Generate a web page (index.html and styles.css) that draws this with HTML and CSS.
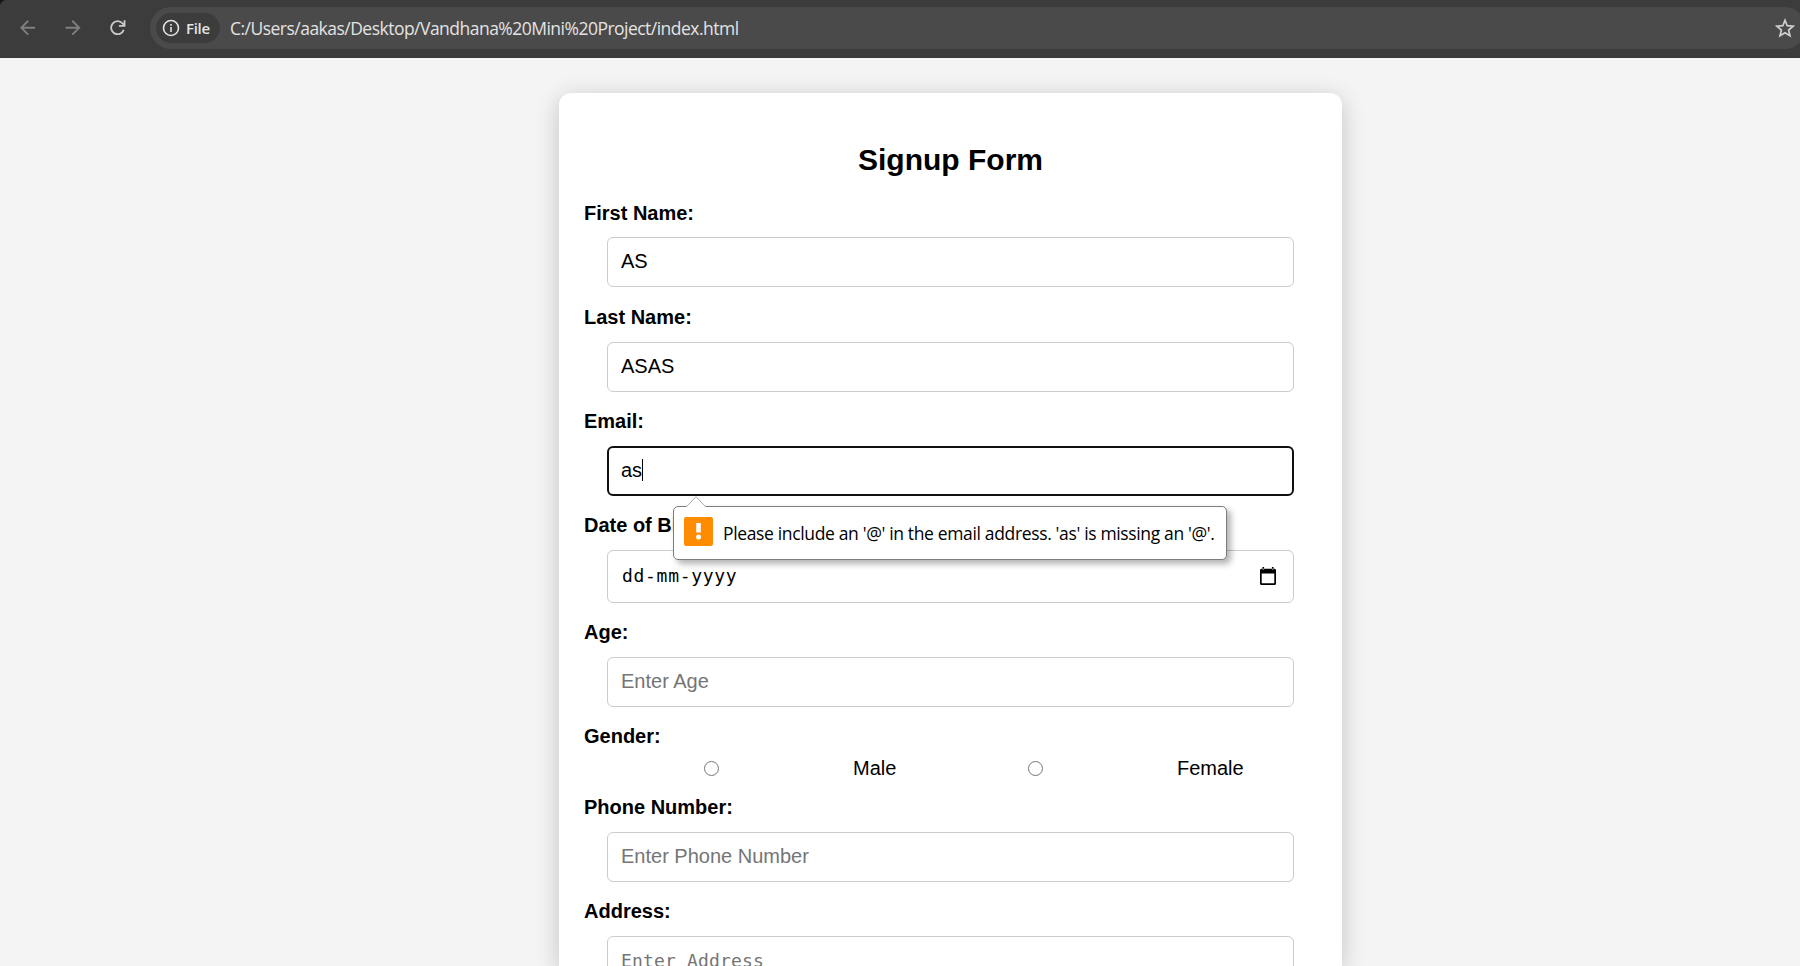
FILE: index.html
```html
<!DOCTYPE html>
<html lang="en">
<head>
<meta charset="utf-8">
<title>Signup Form</title>
<link rel="stylesheet" href="styles.css">
</head>
<body>
<header class="toolbar">
  <nav class="nav">
    <svg class="nav-icon dim" viewBox="0 0 16 16"><path d="M15.5 8H1.5M8.5 .8L1.3 8l7.2 7.2"/></svg>
    <svg class="nav-icon dim" viewBox="0 0 16 16"><path d="M.5 8h14M7.500 .8L14.700 8l-7.200 7.200"/></svg>
    <svg class="nav-icon" viewBox="0 0 16 16"><path d="M14.200 10.200A6.700 6.700 0 1 1 13 3.600L14.800 5.600M15 .3v5.800H9.200"/></svg>
  </nav>
  <div class="omnibox">
    <div class="chip">
      <svg class="info" viewBox="0 0 18 18"><circle cx="9" cy="9" r="7.500"/><path d="M9 8v5M9 5v1.800"/></svg>
      <span class="chip-text">File</span>
    </div>
    <span class="url">C:/Users/aakas/Desktop/Vandhana%20Mini%20Project/index.html</span>
    <svg class="star" viewBox="0 0 20 20"><path d="M10 2.300l2.200 5.400 5.900.5-4.500 3.800 1.400 5.800L10 14.700l-5 3.100L6.400 12 1.900 8.200l5.900-.5z"/></svg>
  </div>
</header>
<main class="page">
  <form class="card">
    <h2 class="title">Signup Form</h2>
    <div class="field">
      <label class="label">First Name:</label>
      <input class="control" type="text" value="AS">
    </div>
    <div class="field">
      <label class="label">Last Name:</label>
      <input class="control" type="text" value="ASAS">
    </div>
    <div class="field">
      <label class="label">Email:</label>
      <div class="control focused">as<span class="caret"></span></div>
      <div class="tooltip">
        <svg class="tip-arrow" viewBox="0 0 22 12"><path class="arrow-fill" d="M1 11.500L11 1l10 10.500V12H1z"/><path class="arrow-line" d="M1 11L11 .8 21 11"/></svg>
        <svg class="warn" viewBox="0 0 29 29"><rect class="warn-bg" width="29" height="29" rx="2"/><path class="warn-mark" d="M12.200 6h4.600v9.500h-4.600z"/><circle class="warn-mark" cx="14.500" cy="20" r="2.500"/></svg>
        <span class="tip-text">Please include an '@' in the email address. 'as' is missing an '@'.</span>
      </div>
    </div>
    <div class="field date-field">
      <label class="label">Date of Birth:</label>
      <div class="control date">
        <span class="date-text">dd-mm-yyyy</span>
        <svg class="calendar" viewBox="0 0 16 18"><path d="M1.500 1.800h13A1.500 1.500 0 0 1 16 3.300v13.200a1.500 1.500 0 0 1-1.500 1.500h-13A1.500 1.500 0 0 1 0 16.500V3.300a1.500 1.500 0 0 1 1.500-1.500zM1.700 6.400v9.900h12.600V6.400zM2.500 0h1.600v2.500H2.500zM11.900 0h1.600v2.500h-1.600z" fill-rule="evenodd"/></svg>
      </div>
    </div>
    <div class="field">
      <label class="label">Age:</label>
      <input class="control" type="text" placeholder="Enter Age">
    </div>
    <div class="field gender-field">
      <label class="label">Gender:</label>
      <div class="options">
        <div class="option"><span class="radio"></span>Male</div>
        <div class="option"><span class="radio"></span>Female</div>
      </div>
    </div>
    <div class="field">
      <label class="label">Phone Number:</label>
      <input class="control" type="text" placeholder="Enter Phone Number">
    </div>
    <div class="field">
      <label class="label">Address:</label>
      <textarea class="control address" placeholder="Enter Address"></textarea>
    </div>
  </form>
</main>
</body>
</html>
```

FILE: styles.css
```css
* { box-sizing: border-box; }

body {
  margin: 0;
  height: 966px;
  overflow: hidden;
  background: #f4f4f4;
  color: #000;
  font: 20px/24px "Liberation Sans", Arial, sans-serif;
}

/* Browser toolbar */
.toolbar {
  position: relative;
  z-index: 1;
  display: flex;
  height: 58px;
  padding: 7px 0 9px 20px;
  overflow: hidden;
  background: radial-gradient(circle at 8px 8px, #3c3c3c 8px, #151515 9px) 0 0 / 8px 8px no-repeat #3c3c3c;
}
.nav {
  display: flex;
  flex: none;
  gap: 29.500px;
  width: 130px;
  padding-top: 12.500px;
}
.nav-icon {
  width: 15.500px;
  height: 15.500px;
  fill: none;
  stroke: #c9c9c9;
  stroke-width: 1.900;
}
.nav-icon.dim { stroke: #7f7f7f; }
.omnibox {
  display: flex;
  flex: none;
  align-items: center;
  width: 1656px;
  height: 42px;
  padding: 0 11px 0 6px;
  border-radius: 21px;
  background: #4a4a4a;
}
.chip {
  display: flex;
  align-items: center;
  width: 64px;
  height: 30px;
  padding-left: 6px;
  border-radius: 15px;
  background: #3c3c3c;
}
.info {
  width: 18px;
  height: 18px;
  fill: none;
  stroke: #e3e3e3;
  stroke-width: 1.600;
}
.chip-text {
  margin-left: 6px;
  color: #e3e3e3;
  font: 600 15px/20px "Open Sans", sans-serif;
  letter-spacing: -0.300px;
}
.url {
  margin-left: 10px;
  color: #e3e3e3;
  font: 17.500px/24px "Open Sans", sans-serif;
  letter-spacing: -0.520px;
  white-space: nowrap;
}
.star {
  width: 20px;
  height: 20px;
  margin-left: auto;
  fill: none;
  stroke: #cfcfcf;
  stroke-width: 1.700;
}

/* Signup card */
.page {
  height: 908px;
  padding: 35px 0 0 559px;
  overflow: hidden;
}
.card {
  width: 783px;
  height: 873px;
  padding: 49px 25px 0;
  border-radius: 12px 12px 0 0;
  background: #fff;
  box-shadow: 0 5px 25px rgba(0, 0, 0, 0.2), 0 30px 25px rgba(0, 0, 0, 0);
}
.title {
  margin: 0 0 22.500px;
  font-size: 30px;
  line-height: 36px;
  text-align: center;
}
.field {
  position: relative;
  height: 104.250px;
}
.date-field { height: 106.750px; }
.gender-field { height: 70.600px; }
.label {
  display: block;
  height: 24px;
  margin-bottom: 12.800px;
  font-weight: bold;
}
.control {
  display: block;
  width: 687px;
  height: 50px;
  margin: 0 0 0 23px;
  padding: 0 13px 1px;
  border: 1px solid #ccc;
  border-radius: 6px;
  outline: none;
  background: #fff;
  color: #000;
  font: 20px/24px "Liberation Sans", Arial, sans-serif;
}
.control::placeholder { color: #757575; opacity: 1; }
.focused {
  display: flex;
  align-items: center;
  padding: 0 12px 1px;
  border: 2px solid #101010;
}
.caret {
  width: 1px;
  height: 22px;
  background: #000;
}
.date {
  display: flex;
  align-items: center;
  justify-content: space-between;
  height: 52.500px;
  padding: 0 17px 0 14px;
}
.date-text {
  font: 18px/24px "DejaVu Sans Mono", monospace;
  letter-spacing: 0.700px;
}
.calendar { width: 16px; height: 18px; }
.address {
  height: 120px;
  padding: 12px 13px;
  resize: none;
  font: 18px/24px "DejaVu Sans Mono", monospace;
  letter-spacing: 0.160px;
}
.options {
  display: flex;
  margin: -4.800px 0 0 120px;
}
.option {
  display: flex;
  flex: none;
  align-items: center;
  gap: 134px;
  width: 324px;
}
.radio {
  width: 15px;
  height: 15px;
  border: 1px solid #767676;
  border-radius: 50%;
}

/* Validation bubble */
.tooltip {
  position: absolute;
  z-index: 2;
  top: 96.500px;
  left: 89px;
  display: flex;
  align-items: center;
  width: 554px;
  height: 54px;
  padding: 0 10px;
  border: 1px solid #7c7c7c;
  border-radius: 5px;
  background: #fff;
  box-shadow: 4px 4px 6px rgba(0, 0, 0, 0.3);
}
.tip-arrow {
  position: absolute;
  top: -11px;
  left: 11px;
  width: 22px;
  height: 12px;
}
.arrow-fill { fill: #fff; }
.arrow-line { fill: none; stroke: #aaa; }
.warn { flex: none; width: 29px; height: 29px; margin-top: -3px; }
.warn-bg { fill: #ff8c00; }
.warn-mark { fill: #fff; }
.tip-text {
  margin-left: 10px;
  font: 17.500px/24px "Open Sans", sans-serif;
  letter-spacing: -0.350px;
  white-space: nowrap;
}
```
